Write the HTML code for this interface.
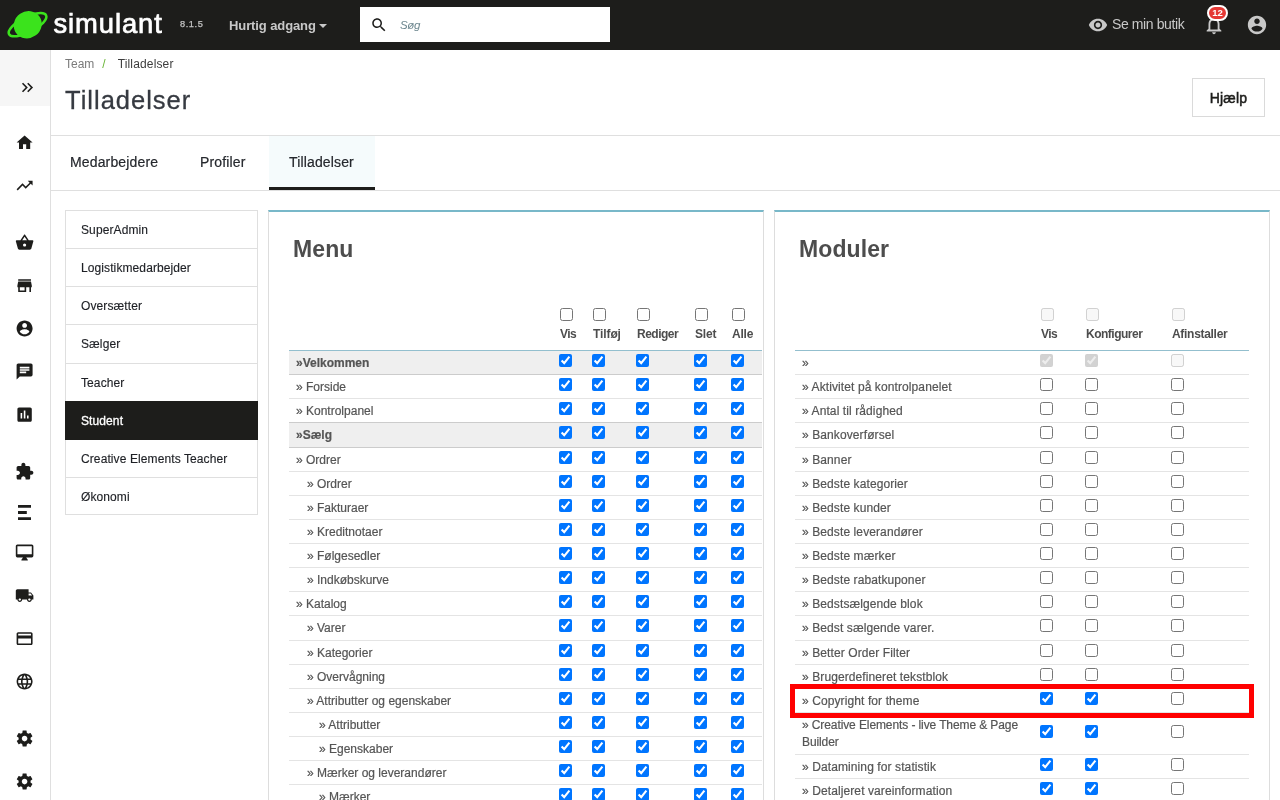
<!DOCTYPE html>
<html lang="da">
<head>
<meta charset="utf-8">
<title>Tilladelser • simulant</title>
<style>
*{box-sizing:border-box}
html,body{margin:0;padding:0}
body{width:1280px;height:800px;overflow:hidden;background:#fff;position:relative;
 font-family:"Liberation Sans",sans-serif;font-size:12px;color:#363a41}
#wrap{position:absolute;left:0;top:0;width:1280px;height:800px;overflow:hidden;will-change:transform}
.abs,.ic{position:absolute}
.ic{display:block}
#header{position:absolute;left:0;top:0;width:1280px;height:50px;background:#1d1d1b}
#logotext{position:absolute;left:53.5px;top:6.4px;font-size:27.4px;line-height:36px;color:#fff;letter-spacing:0.9px;-webkit-text-stroke:0.7px #fff}
#ver{position:absolute;left:180px;top:18.1px;font-size:9.2px;line-height:12px;color:#c4c4c4;letter-spacing:0.6px;-webkit-text-stroke:0.25px #c4c4c4}
#quick{position:absolute;left:229px;top:18px;font-size:13px;line-height:16px;font-weight:bold;color:#c8c8c8;letter-spacing:-0.1px}
#caret{position:absolute;left:319px;top:24px;width:0;height:0;border-left:4px solid transparent;border-right:4px solid transparent;border-top:4.5px solid #c8c8c8}
#search{position:absolute;left:360px;top:7px;width:250px;height:35px;background:#fff}
#search span{position:absolute;left:40px;top:10px;font-size:11.5px;line-height:16px;font-style:italic;color:#6c868e;letter-spacing:-0.4px}
#shop{position:absolute;left:1112px;top:15px;font-size:14px;line-height:18px;color:#c8c8c8;letter-spacing:-0.4px}
#badge{position:absolute;left:1207px;top:5px;width:21px;height:16px;border-radius:8px;background:#e53935;border:2px solid #fff;color:#fff;font-size:9.5px;line-height:12px;text-align:center;font-weight:bold}
#side{position:absolute;left:0;top:50px;width:51px;height:750px;background:#fff;border-right:1px solid #dfdfdf}
#toggle{position:absolute;left:0;top:0;width:50px;height:56px;background:#f6f6f6}
#bc{position:absolute;left:65px;top:56px;font-size:12px;line-height:16px;color:#3c3c3c;white-space:nowrap}
#bc .t{color:#7a7a7a}
#bc .s{color:#6cb63a;padding:0 12px 0 8px}
h1{position:absolute;left:65px;top:82.6px;margin:0;font-size:25.5px;line-height:34px;font-weight:normal;color:#363a41;letter-spacing:1px;-webkit-text-stroke:0.3px #363a41}
#help{position:absolute;left:1192px;top:78px;width:73px;height:39px;border:1px solid #dadada;background:#fff;
 font-size:14px;line-height:38px;text-align:center;color:#1d1d1b;-webkit-text-stroke:0.5px #1d1d1b;letter-spacing:0.15px}
#tabs{position:absolute;left:51px;top:135px;width:1229px;height:56px;border-top:1px solid #dfdfdf;border-bottom:1px solid #dfdfdf}
#tabs span{position:absolute;top:17px;font-size:14px;line-height:18px;color:#25282d;letter-spacing:0.15px;-webkit-text-stroke:0.2px #25282d}
#tabact{position:absolute;left:218px;top:0;width:106px;height:54px;background:#f5fbfc;border-bottom:3px solid #1d1d1b}
#plist{position:absolute;left:65px;top:210px;width:193px;height:305px;border:1px solid #dfdfdf}
#plist div{position:absolute;left:0;width:191px;height:38.14px;border-top:1px solid #dfdfdf;padding:11px 0 0 15px;font-size:12px;line-height:17.14px;color:#1e2025;letter-spacing:0.1px;-webkit-text-stroke:0.15px #1e2025}

#plist div.on{background:#1d1d1b;color:#fff;border-top-color:#1d1d1b;height:39.3px;z-index:2;-webkit-text-stroke:0.3px #fff;left:-1px;width:193px;padding-left:16px}
.panel{position:absolute;top:210px;height:620px;width:496px;background:#fff;border:1px solid #dddddd;border-top:2px solid #78b8c9}
.panel h3{position:absolute;left:24px;top:23px;letter-spacing:0.1px;margin:0;font-size:23px;line-height:28px;font-weight:bold;color:#4d4d4d}
.tbl{position:absolute;top:138px;border-top:1px solid #93bfce}
.hd{position:absolute;font-size:12px;line-height:16px;font-weight:bold;color:#4d4d4d;white-space:nowrap}
.r{position:relative;height:24.14px;border-bottom:1px solid #e4e4e4}
.r.sec{background:#efefef;border-bottom-color:#cccccc}
.r.sec b{font-weight:bold}
.r .t{position:absolute;top:4px;font-size:12px;line-height:17.14px;color:#555;white-space:nowrap;-webkit-text-stroke:0.2px #555}
.r.pre{border-bottom-color:#cccccc}
#mods .t{letter-spacing:0.1px}
.r.two{height:42.28px}
input[type=checkbox]{position:absolute;margin:0;width:13px;height:13px;top:3px}
</style>
</head>
<body>
<div id="wrap">

<div id="header">
<svg class="ic" style="left:0;top:0" width="60" height="50" viewBox="0 0 60 50"><g transform="rotate(-27 27.5 24.6)"><ellipse cx="27.5" cy="24.7" rx="20.8" ry="7.6" fill="none" stroke="#3be31c" stroke-width="2.5"/></g><g transform="rotate(-35 27.6 24.7)"><ellipse cx="27.7" cy="24.8" rx="14.3" ry="13.3" fill="#3be31c"/></g></svg>
<div id="logotext">simulant</div>
<div id="ver">8.1.5</div>
<div id="quick">Hurtig adgang</div><div id="caret"></div>
<div id="search"><svg class="ic" style="left:10px;top:9.2px" width="18" height="18" viewBox="0 0 24 24"><path fill="#1d1d1b" d="M15.5 14h-.79l-.28-.27C15.41 12.59 16 11.11 16 9.5 16 5.91 13.09 3 9.5 3S3 5.91 3 9.5 5.91 16 9.5 16c1.61 0 3.09-.59 4.23-1.57l.27.28v.79l5 4.99L20.49 19l-4.99-5zm-6 0C7.01 14 5 11.99 5 9.5S7.01 5 9.5 5 14 7.01 14 9.5 11.99 14 9.5 14z"/></svg><span>Søg</span></div>
<svg class="ic" style="left:1087.5px;top:15px" width="20" height="20" viewBox="0 0 24 24"><path fill="#c8c8c8" d="M12 4.5C7 4.5 2.73 7.61 1 12c1.73 4.39 6 7.5 11 7.5s9.27-3.11 11-7.5c-1.73-4.39-6-7.5-11-7.5zM12 17c-2.76 0-5-2.24-5-5s2.24-5 5-5 5 2.24 5 5-2.24 5-5 5zm0-8c-1.66 0-3 1.34-3 3s1.34 3 3 3 3-1.34 3-3-1.34-3-3-3z"/></svg>
<div id="shop">Se min butik</div>
<svg class="ic" style="left:1203px;top:13.5px" width="22" height="22" viewBox="0 0 24 24"><path fill="#c8c8c8" d="M12 22c1.1 0 2-.9 2-2h-4c0 1.1.9 2 2 2zm6-6v-5c0-3.07-1.63-5.64-4.5-6.32V4c0-.83-.67-1.5-1.5-1.5s-1.5.67-1.5 1.5v.68C7.64 5.36 6 7.92 6 11v5l-2 2v1h16v-1l-2-2zm-2 1H8v-6c0-2.48 1.51-4.5 4-4.5s4 2.02 4 4.5v6z"/></svg>
<div id="badge">12</div>
<svg class="ic" style="left:1246px;top:14px" width="22" height="22" viewBox="0 0 24 24"><path fill="#c8c8c8" d="M12 2C6.48 2 2 6.48 2 12s4.48 10 10 10 10-4.48 10-10S17.52 2 12 2zm0 3c1.66 0 3 1.34 3 3s-1.34 3-3 3-3-1.34-3-3 1.34-3 3-3zm0 14.2c-2.5 0-4.71-1.28-6-3.22.03-1.99 4-3.08 6-3.08 1.99 0 5.97 1.09 6 3.08-1.29 1.94-3.5 3.22-6 3.22z"/></svg>
</div>
<div id="side"><div id="toggle"><svg class="ic" style="left:17.9px;top:27.9px" width="19" height="19" viewBox="0 0 24 24"><path fill="#1d1d1b" d="M6.41 6L5 7.41 9.58 12 5 16.59 6.41 18l6-6z M13 6l-1.41 1.41L16.17 12l-4.58 4.59L13 18l6-6z"/></svg></div>
<svg class="ic" style="left:15px;top:82.8px" width="19.2" height="19.2" viewBox="0 0 24 24"><path fill="#1d1d1b" d="M10 20v-6h4v6h5v-8h3L12 3 2 12h3v8z"/></svg>
<svg class="ic" style="left:15px;top:125.7px" width="19.2" height="19.2" viewBox="0 0 24 24"><path fill="#1d1d1b" d="M16 6l2.29 2.29-4.88 4.88-4-4L2 16.59 3.41 18l6-6 4 4 6.3-6.29L22 12V6z"/></svg>
<svg class="ic" style="left:15px;top:182.8px" width="19.2" height="19.2" viewBox="0 0 24 24"><path fill="#1d1d1b" d="M17.21 9l-4.38-6.56c-.19-.28-.51-.42-.83-.42-.32 0-.64.14-.83.43L6.79 9H2c-.55 0-1 .45-1 1 0 .09.01.18.04.27l2.54 9.27c.23.84 1 1.46 1.92 1.46h13c.92 0 1.69-.62 1.93-1.46l2.54-9.27L23 10c0-.55-.45-1-1-1h-4.79zM9 9l3-4.4L15 9H9zm3 8c-1.1 0-2-.9-2-2s.9-2 2-2 2 .9 2 2-.9 2-2 2z"/></svg>
<svg class="ic" style="left:15px;top:225.8px" width="19.2" height="19.2" viewBox="0 0 24 24"><path fill="#1d1d1b" d="M20 4H4v2h16V4zm1 10v-2l-1-5H4l-1 5v2h1v6h10v-6h4v6h2v-6h1zm-9 4H6v-4h6v4z"/></svg>
<svg class="ic" style="left:15px;top:268.6px" width="19.2" height="19.2" viewBox="0 0 24 24"><path fill="#1d1d1b" d="M12 2C6.48 2 2 6.48 2 12s4.48 10 10 10 10-4.48 10-10S17.52 2 12 2zm0 3c1.66 0 3 1.34 3 3s-1.34 3-3 3-3-1.34-3-3 1.34-3 3-3zm0 14.2c-2.5 0-4.71-1.28-6-3.22.03-1.99 4-3.08 6-3.08 1.99 0 5.97 1.09 6 3.08-1.29 1.94-3.5 3.22-6 3.22z"/></svg>
<svg class="ic" style="left:15px;top:311.6px" width="19.2" height="19.2" viewBox="0 0 24 24"><path fill="#1d1d1b" d="M20 2H4c-1.1 0-1.99.9-1.99 2L2 22l4-4h14c1.1 0 2-.9 2-2V4c0-1.1-.9-2-2-2zM6 9h12v2H6V9zm8 5H6v-2h8v2zm4-6H6V6h12v2z"/></svg>
<svg class="ic" style="left:15px;top:354.8px" width="19.2" height="19.2" viewBox="0 0 24 24"><path fill="#1d1d1b" d="M19 3H5c-1.1 0-2 .9-2 2v14c0 1.1.9 2 2 2h14c1.1 0 2-.9 2-2V5c0-1.1-.9-2-2-2zM9 17H7v-7h2v7zm4 0h-2V7h2v10zm4 0h-2v-4h2v4z"/></svg>
<svg class="ic" style="left:15px;top:412px" width="19.2" height="19.2" viewBox="0 0 24 24"><path fill="#1d1d1b" d="M20.5 11H19V7c0-1.1-.9-2-2-2h-4V3.5C13 2.12 11.88 1 10.5 1S8 2.12 8 3.5V5H4c-1.1 0-1.99.9-1.99 2v3.8H3.5c1.49 0 2.7 1.21 2.7 2.7s-1.21 2.7-2.7 2.7H2V20c0 1.1.9 2 2 2h3.8v-1.5c0-1.49 1.21-2.7 2.7-2.7 1.49 0 2.7 1.21 2.7 2.7V22H17c1.1 0 2-.9 2-2v-4h1.5c1.38 0 2.5-1.12 2.5-2.5S21.88 11 20.5 11z"/></svg>
<svg class="ic" style="left:18px;top:455px" width="13" height="15" viewBox="0 0 13 15"><path fill="#1d1d1b" d="M0 0h13v2.8H0zM0 6.1h8.8v2.8H0zM0 12.2h13v2.8H0z"/></svg>
<svg class="ic" style="left:15px;top:492.6px" width="19.2" height="19.2" viewBox="0 0 24 24"><path fill="#1d1d1b" d="M21 2H3c-1.1 0-2 .9-2 2v12c0 1.1.9 2 2 2h7l-2 3v1h8v-1l-2-3h7c1.1 0 2-.9 2-2V4c0-1.1-.9-2-2-2zm0 12H3V4h18v10z"/></svg>
<svg class="ic" style="left:15px;top:535.8px" width="19.2" height="19.2" viewBox="0 0 24 24"><path fill="#1d1d1b" d="M20 8h-3V4H3c-1.1 0-2 .9-2 2v11h2c0 1.66 1.34 3 3 3s3-1.34 3-3h6c0 1.66 1.34 3 3 3s3-1.34 3-3h2v-5l-3-4zM6 18.5c-.83 0-1.5-.67-1.5-1.5s.67-1.5 1.5-1.5 1.5.67 1.5 1.5-.67 1.5-1.5 1.5zm13.5-9l1.96 2.5H17V9.5h2.5zm-1.5 9c-.83 0-1.5-.67-1.5-1.5s.67-1.5 1.5-1.5 1.5.67 1.5 1.5-.67 1.5-1.5 1.5z"/></svg>
<svg class="ic" style="left:15px;top:578.8px" width="19.2" height="19.2" viewBox="0 0 24 24"><path fill="#1d1d1b" d="M20 4H4c-1.11 0-1.99.89-1.99 2L2 18c0 1.11.89 2 2 2h16c1.11 0 2-.89 2-2V6c0-1.11-.89-2-2-2zm0 14H4v-6h16v6zm0-10H4V6h16v2z"/></svg>
<svg class="ic" style="left:15px;top:621.8px" width="19.2" height="19.2" viewBox="0 0 24 24"><path fill="#1d1d1b" d="M11.99 2C6.47 2 2 6.48 2 12s4.47 10 9.99 10C17.52 22 22 17.52 22 12S17.52 2 11.99 2zm6.93 6h-2.95c-.32-1.25-.78-2.45-1.38-3.56 1.84.63 3.37 1.91 4.33 3.56zM12 4.04c.83 1.2 1.48 2.53 1.91 3.96h-3.82c.43-1.43 1.08-2.76 1.91-3.96zM4.26 14C4.1 13.36 4 12.69 4 12s.1-1.36.26-2h3.38c-.08.66-.14 1.32-.14 2 0 .68.06 1.34.14 2H4.26zm.82 2h2.95c.32 1.25.78 2.45 1.38 3.56-1.84-.63-3.37-1.9-4.33-3.56zm2.95-8H5.08c.96-1.66 2.49-2.93 4.33-3.56C8.81 5.55 8.35 6.75 8.03 8zM12 19.96c-.83-1.2-1.48-2.53-1.91-3.96h3.82c-.43 1.43-1.08 2.76-1.91 3.96zM14.34 14H9.66c-.09-.66-.16-1.32-.16-2 0-.68.07-1.35.16-2h4.68c.09.65.16 1.32.16 2 0 .68-.07 1.34-.16 2zm.25 5.56c.6-1.11 1.06-2.31 1.38-3.56h2.95c-.96 1.65-2.49 2.93-4.33 3.56zM16.36 14c.08-.66.14-1.32.14-2 0-.68-.06-1.34-.14-2h3.38c.16.64.26 1.31.26 2s-.1 1.36-.26 2h-3.38z"/></svg>
<svg class="ic" style="left:15px;top:678.8px" width="19.2" height="19.2" viewBox="0 0 24 24"><path fill="#1d1d1b" d="M19.43 12.98c.04-.32.07-.64.07-.98s-.03-.66-.07-.98l2.11-1.65c.19-.15.24-.42.12-.64l-2-3.46c-.12-.22-.39-.3-.61-.22l-2.49 1c-.52-.4-1.08-.73-1.69-.98l-.38-2.65C14.46 2.18 14.25 2 14 2h-4c-.25 0-.46.18-.49.42l-.38 2.65c-.61.25-1.17.59-1.69.98l-2.49-1c-.23-.09-.49 0-.61.22l-2 3.46c-.13.22-.07.49.12.64l2.11 1.65c-.04.32-.07.65-.07.98s.03.66.07.98l-2.11 1.65c-.19.15-.24.42-.12.64l2 3.46c.12.22.39.3.61.22l2.49-1c.52.4 1.08.73 1.69.98l.38 2.65c.03.24.24.42.49.42h4c.25 0 .46-.18.49-.42l.38-2.65c.61-.25 1.17-.59 1.69-.98l2.49 1c.23.09.49 0 .61-.22l2-3.46c.12-.22.07-.49-.12-.64l-2.11-1.65zM12 15.5c-1.93 0-3.5-1.57-3.5-3.5s1.57-3.5 3.5-3.5 3.5 1.57 3.5 3.5-1.57 3.5-3.5 3.5z"/></svg>
<svg class="ic" style="left:15px;top:721.8px" width="19.2" height="19.2" viewBox="0 0 24 24"><path fill="#1d1d1b" d="M19.43 12.98c.04-.32.07-.64.07-.98s-.03-.66-.07-.98l2.11-1.65c.19-.15.24-.42.12-.64l-2-3.46c-.12-.22-.39-.3-.61-.22l-2.49 1c-.52-.4-1.08-.73-1.69-.98l-.38-2.65C14.46 2.18 14.25 2 14 2h-4c-.25 0-.46.18-.49.42l-.38 2.65c-.61.25-1.17.59-1.69.98l-2.49-1c-.23-.09-.49 0-.61.22l-2 3.46c-.13.22-.07.49.12.64l2.11 1.65c-.04.32-.07.65-.07.98s.03.66.07.98l-2.11 1.65c-.19.15-.24.42-.12.64l2 3.46c.12.22.39.3.61.22l2.49-1c.52.4 1.08.73 1.69.98l.38 2.65c.03.24.24.42.49.42h4c.25 0 .46-.18.49-.42l.38-2.65c.61-.25 1.17-.59 1.69-.98l2.49 1c.23.09.49 0 .61-.22l2-3.46c.12-.22.07-.49-.12-.64l-2.11-1.65zM12 15.5c-1.93 0-3.5-1.57-3.5-3.5s1.57-3.5 3.5-3.5 3.5 1.57 3.5 3.5-1.57 3.5-3.5 3.5z"/></svg>
</div>
<div id="bc"><span class="t">Team</span><span class="s">/</span><span style="letter-spacing:0.15px">Tilladelser</span></div>
<h1>Tilladelser</h1>
<div id="help">Hjælp</div>
<div id="tabs"><div id="tabact"></div><span style="left:19px">Medarbejdere</span><span style="left:149px">Profiler</span><span style="left:238px">Tilladelser</span></div>
<div id="plist">
<div style="top:-1.00px">SuperAdmin</div>
<div style="top:37.14px">Logistikmedarbejder</div>
<div style="top:75.28px">Oversætter</div>
<div style="top:113.42px">Sælger</div>
<div style="top:151.56px">Teacher</div>
<div class="on" style="top:189.70px">Student</div>
<div style="top:227.84px">Creative Elements Teacher</div>
<div style="top:265.98px">Økonomi</div>
</div>
<div class="panel" style="left:268px"><h3>Menu</h3>
<input type="checkbox" style="left:291px;top:96px">
<div class="hd" style="left:291px;top:114px;letter-spacing:-0.5px">Vis</div>
<input type="checkbox" style="left:324px;top:96px">
<div class="hd" style="left:324px;top:114px;letter-spacing:-0.1px">Tilføj</div>
<input type="checkbox" style="left:368px;top:96px">
<div class="hd" style="left:368px;top:114px;letter-spacing:-0.5px">Rediger</div>
<input type="checkbox" style="left:426px;top:96px">
<div class="hd" style="left:426px;top:114px;letter-spacing:-0.2px">Slet</div>
<input type="checkbox" style="left:463px;top:96px">
<div class="hd" style="left:463px;top:114px;letter-spacing:-0.2px">Alle</div>
<div class="tbl" id="menu" style="left:20px;width:473px">
<div class="r sec"><span class="t" style="left:7px"><b>»Velkommen</b></span><input type="checkbox" checked style="left:270px"><input type="checkbox" checked style="left:303px"><input type="checkbox" checked style="left:347px"><input type="checkbox" checked style="left:405px"><input type="checkbox" checked style="left:442px"></div>
<div class="r"><span class="t" style="left:7px">» Forside</span><input type="checkbox" checked style="left:270px"><input type="checkbox" checked style="left:303px"><input type="checkbox" checked style="left:347px"><input type="checkbox" checked style="left:405px"><input type="checkbox" checked style="left:442px"></div>
<div class="r pre"><span class="t" style="left:7px">» Kontrolpanel</span><input type="checkbox" checked style="left:270px"><input type="checkbox" checked style="left:303px"><input type="checkbox" checked style="left:347px"><input type="checkbox" checked style="left:405px"><input type="checkbox" checked style="left:442px"></div>
<div class="r sec"><span class="t" style="left:7px"><b>»Sælg</b></span><input type="checkbox" checked style="left:270px"><input type="checkbox" checked style="left:303px"><input type="checkbox" checked style="left:347px"><input type="checkbox" checked style="left:405px"><input type="checkbox" checked style="left:442px"></div>
<div class="r"><span class="t" style="left:7px">» Ordrer</span><input type="checkbox" checked style="left:270px"><input type="checkbox" checked style="left:303px"><input type="checkbox" checked style="left:347px"><input type="checkbox" checked style="left:405px"><input type="checkbox" checked style="left:442px"></div>
<div class="r"><span class="t" style="left:18px">» Ordrer</span><input type="checkbox" checked style="left:270px"><input type="checkbox" checked style="left:303px"><input type="checkbox" checked style="left:347px"><input type="checkbox" checked style="left:405px"><input type="checkbox" checked style="left:442px"></div>
<div class="r"><span class="t" style="left:18px">» Fakturaer</span><input type="checkbox" checked style="left:270px"><input type="checkbox" checked style="left:303px"><input type="checkbox" checked style="left:347px"><input type="checkbox" checked style="left:405px"><input type="checkbox" checked style="left:442px"></div>
<div class="r"><span class="t" style="left:18px">» Kreditnotaer</span><input type="checkbox" checked style="left:270px"><input type="checkbox" checked style="left:303px"><input type="checkbox" checked style="left:347px"><input type="checkbox" checked style="left:405px"><input type="checkbox" checked style="left:442px"></div>
<div class="r"><span class="t" style="left:18px">» Følgesedler</span><input type="checkbox" checked style="left:270px"><input type="checkbox" checked style="left:303px"><input type="checkbox" checked style="left:347px"><input type="checkbox" checked style="left:405px"><input type="checkbox" checked style="left:442px"></div>
<div class="r"><span class="t" style="left:18px">» Indkøbskurve</span><input type="checkbox" checked style="left:270px"><input type="checkbox" checked style="left:303px"><input type="checkbox" checked style="left:347px"><input type="checkbox" checked style="left:405px"><input type="checkbox" checked style="left:442px"></div>
<div class="r"><span class="t" style="left:7px">» Katalog</span><input type="checkbox" checked style="left:270px"><input type="checkbox" checked style="left:303px"><input type="checkbox" checked style="left:347px"><input type="checkbox" checked style="left:405px"><input type="checkbox" checked style="left:442px"></div>
<div class="r"><span class="t" style="left:18px">» Varer</span><input type="checkbox" checked style="left:270px"><input type="checkbox" checked style="left:303px"><input type="checkbox" checked style="left:347px"><input type="checkbox" checked style="left:405px"><input type="checkbox" checked style="left:442px"></div>
<div class="r"><span class="t" style="left:18px">» Kategorier</span><input type="checkbox" checked style="left:270px"><input type="checkbox" checked style="left:303px"><input type="checkbox" checked style="left:347px"><input type="checkbox" checked style="left:405px"><input type="checkbox" checked style="left:442px"></div>
<div class="r"><span class="t" style="left:18px">» Overvågning</span><input type="checkbox" checked style="left:270px"><input type="checkbox" checked style="left:303px"><input type="checkbox" checked style="left:347px"><input type="checkbox" checked style="left:405px"><input type="checkbox" checked style="left:442px"></div>
<div class="r"><span class="t" style="left:18px">» Attributter og egenskaber</span><input type="checkbox" checked style="left:270px"><input type="checkbox" checked style="left:303px"><input type="checkbox" checked style="left:347px"><input type="checkbox" checked style="left:405px"><input type="checkbox" checked style="left:442px"></div>
<div class="r"><span class="t" style="left:30px">» Attributter</span><input type="checkbox" checked style="left:270px"><input type="checkbox" checked style="left:303px"><input type="checkbox" checked style="left:347px"><input type="checkbox" checked style="left:405px"><input type="checkbox" checked style="left:442px"></div>
<div class="r"><span class="t" style="left:30px">» Egenskaber</span><input type="checkbox" checked style="left:270px"><input type="checkbox" checked style="left:303px"><input type="checkbox" checked style="left:347px"><input type="checkbox" checked style="left:405px"><input type="checkbox" checked style="left:442px"></div>
<div class="r"><span class="t" style="left:18px">» Mærker og leverandører</span><input type="checkbox" checked style="left:270px"><input type="checkbox" checked style="left:303px"><input type="checkbox" checked style="left:347px"><input type="checkbox" checked style="left:405px"><input type="checkbox" checked style="left:442px"></div>
<div class="r"><span class="t" style="left:30px">» Mærker</span><input type="checkbox" checked style="left:270px"><input type="checkbox" checked style="left:303px"><input type="checkbox" checked style="left:347px"><input type="checkbox" checked style="left:405px"><input type="checkbox" checked style="left:442px"></div>
<div class="r"><span class="t" style="left:30px">» Leverandører</span><input type="checkbox" checked style="left:270px"><input type="checkbox" checked style="left:303px"><input type="checkbox" checked style="left:347px"><input type="checkbox" checked style="left:405px"><input type="checkbox" checked style="left:442px"></div>
</div></div>
<div class="panel" style="left:774px"><h3>Moduler</h3>
<input type="checkbox" disabled style="left:266px;top:96px">
<div class="hd" style="left:266px;top:114px;letter-spacing:-0.5px">Vis</div>
<input type="checkbox" disabled style="left:311px;top:96px">
<div class="hd" style="left:311px;top:114px;letter-spacing:-0.5px">Konfigurer</div>
<input type="checkbox" disabled style="left:397px;top:96px">
<div class="hd" style="left:397px;top:114px;letter-spacing:-0.3px">Afinstaller</div>
<div class="tbl" id="mods" style="left:20px;width:454px">
<div class="r"><span class="t" style="left:7px;">»</span><input type="checkbox" checked disabled style="left:245px;"><input type="checkbox" checked disabled style="left:290px;"><input type="checkbox" disabled style="left:376px;"></div>
<div class="r"><span class="t" style="left:7px;">» Aktivitet på kontrolpanelet</span><input type="checkbox"  style="left:245px;"><input type="checkbox"  style="left:290px;"><input type="checkbox"  style="left:376px;"></div>
<div class="r"><span class="t" style="left:7px;">» Antal til rådighed</span><input type="checkbox"  style="left:245px;"><input type="checkbox"  style="left:290px;"><input type="checkbox"  style="left:376px;"></div>
<div class="r"><span class="t" style="left:7px;">» Bankoverførsel</span><input type="checkbox"  style="left:245px;"><input type="checkbox"  style="left:290px;"><input type="checkbox"  style="left:376px;"></div>
<div class="r"><span class="t" style="left:7px;">» Banner</span><input type="checkbox"  style="left:245px;"><input type="checkbox"  style="left:290px;"><input type="checkbox"  style="left:376px;"></div>
<div class="r"><span class="t" style="left:7px;">» Bedste kategorier</span><input type="checkbox"  style="left:245px;"><input type="checkbox"  style="left:290px;"><input type="checkbox"  style="left:376px;"></div>
<div class="r"><span class="t" style="left:7px;">» Bedste kunder</span><input type="checkbox"  style="left:245px;"><input type="checkbox"  style="left:290px;"><input type="checkbox"  style="left:376px;"></div>
<div class="r"><span class="t" style="left:7px;">» Bedste leverandører</span><input type="checkbox"  style="left:245px;"><input type="checkbox"  style="left:290px;"><input type="checkbox"  style="left:376px;"></div>
<div class="r"><span class="t" style="left:7px;">» Bedste mærker</span><input type="checkbox"  style="left:245px;"><input type="checkbox"  style="left:290px;"><input type="checkbox"  style="left:376px;"></div>
<div class="r"><span class="t" style="left:7px;">» Bedste rabatkuponer</span><input type="checkbox"  style="left:245px;"><input type="checkbox"  style="left:290px;"><input type="checkbox"  style="left:376px;"></div>
<div class="r"><span class="t" style="left:7px;">» Bedstsælgende blok</span><input type="checkbox"  style="left:245px;"><input type="checkbox"  style="left:290px;"><input type="checkbox"  style="left:376px;"></div>
<div class="r"><span class="t" style="left:7px;">» Bedst sælgende varer.</span><input type="checkbox"  style="left:245px;"><input type="checkbox"  style="left:290px;"><input type="checkbox"  style="left:376px;"></div>
<div class="r"><span class="t" style="left:7px;">» Better Order Filter</span><input type="checkbox"  style="left:245px;"><input type="checkbox"  style="left:290px;"><input type="checkbox"  style="left:376px;"></div>
<div class="r"><span class="t" style="left:7px;">» Brugerdefineret tekstblok</span><input type="checkbox"  style="left:245px;"><input type="checkbox"  style="left:290px;"><input type="checkbox"  style="left:376px;"></div>
<div class="r"><span class="t" style="left:7px;">» Copyright for theme</span><input type="checkbox" checked style="left:245px;"><input type="checkbox" checked style="left:290px;"><input type="checkbox"  style="left:376px;"></div>
<div class="r two"><span class="t" style="left:7px;white-space:normal;letter-spacing:-0.1px">» Creative Elements - live Theme &amp; Page<br>Builder</span><input type="checkbox" checked style="left:245px; top:12px;"><input type="checkbox" checked style="left:290px; top:12px;"><input type="checkbox"  style="left:376px; top:12px;"></div>
<div class="r"><span class="t" style="left:7px;">» Datamining for statistik</span><input type="checkbox" checked style="left:245px;"><input type="checkbox" checked style="left:290px;"><input type="checkbox"  style="left:376px;"></div>
<div class="r"><span class="t" style="left:7px;">» Detaljeret vareinformation</span><input type="checkbox" checked style="left:245px;"><input type="checkbox" checked style="left:290px;"><input type="checkbox"  style="left:376px;"></div>
</div>
<div class="abs" style="left:15px;top:472px;width:464px;height:34px;border:5px solid #ff0000"></div>
</div>
</div>
</body></html>
